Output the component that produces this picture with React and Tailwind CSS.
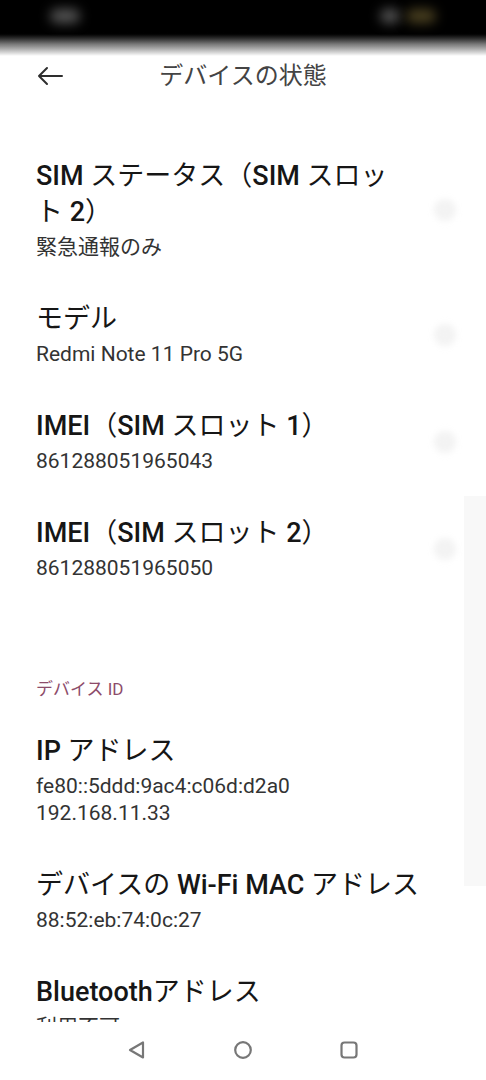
import React from 'react'

const FONT = { fontFamily: '"Roboto", "Noto Sans CJK JP", sans-serif' }

// Latin runs render heavier than the kana in the reference
function Mixed({ text }) {
  const parts = text.split(/([A-Za-z0-9\-]+)/)
  return parts.map((p, i) =>
    /^[A-Za-z0-9\-]+$/.test(p) ? (
      <span key={i} className="font-medium">{p}</span>
    ) : (
      <span key={i}>{p}</span>
    )
  )
}

function Row({ title, lines, dot = true }) {
  return (
    <div className="flex items-center justify-between pl-[36px] pr-[20px] py-[20px]">
      <div className="flex flex-col min-w-0">
        <div className={dot ? 'text-[27px] leading-[36px] text-[#161616] max-w-[372px]' : 'text-[27px] leading-[36px] text-[#161616] whitespace-nowrap'}>
          <Mixed text={title} />
        </div>
        <div className="mt-[4px] flex flex-col">
          {lines.map((l) => (
            <div key={l} className="text-[21px] leading-[27px] text-[#333333]">{l}</div>
          ))}
        </div>
      </div>
      {dot && <div className="w-[22px] h-[22px] mr-[10px] rounded-full bg-[#f3f3f3] blur-[3px] shrink-0" />}
    </div>
  )
}

export default function App() {
  return (
    <div className="w-[486px] h-[1080px] bg-white flex flex-col overflow-hidden relative" style={FONT}>
      {/* blurred status bar */}
      <div className="h-[32px] bg-black shrink-0 flex items-center justify-between px-[50px]">
        <div className="w-[30px] h-[14px] rounded-full bg-[#555] blur-[6px]" />
        <div className="flex gap-[6px]">
          <div className="w-[20px] h-[14px] rounded-full bg-[#555] blur-[6px]" />
          <div className="w-[30px] h-[14px] rounded-full bg-[#4a4020] blur-[6px]" />
        </div>
      </div>
      <div className="h-[24px] shrink-0 bg-gradient-to-b from-black via-[#777] to-white" />

      {/* header */}
      <div className="h-[40px] shrink-0 flex items-center relative">
        <div className="pl-[36px]">
          <svg width="28" height="22" viewBox="0 0 28 22" fill="none" stroke="#2e2e2e" strokeWidth="2" strokeLinecap="round" strokeLinejoin="round">
            <path d="M26 11H3M11 3L3 11L11 19" />
          </svg>
        </div>
        <div className="absolute inset-0 flex items-center justify-center text-[24px] text-[#444]">
          デバイスの状態
        </div>
      </div>

      <div className="flex-1 overflow-hidden relative pt-[42px]">
        <Row title="SIM ステータス（SIM スロット 2）" lines={['緊急通報のみ']} />
        <Row title="モデル" lines={['Redmi Note 11 Pro 5G']} />
        <Row title="IMEI（SIM スロット 1）" lines={['861288051965043']} />
        <Row title="IMEI（SIM スロット 2）" lines={['861288051965050']} />

        <div className="pl-[36px] pt-[75px] pb-[12px] text-[17px] leading-[24px] text-[#8d4c6a]">
          デバイス ID
        </div>
        <Row title="IP アドレス" lines={['fe80::5ddd:9ac4:c06d:d2a0', '192.168.11.33']} dot={false} />
        <Row title="デバイスの Wi-Fi MAC アドレス" lines={['88:52:eb:74:0c:27']} dot={false} />
        <Row title="Bluetoothアドレス" lines={['利用不可']} dot={false} />

        {/* faint scrollbar */}
        <div className="absolute right-0 top-[400px] w-[22px] h-[390px] bg-[#f8f8f8]" />
      </div>

      {/* navigation bar */}
      <div className="h-[58px] shrink-0 bg-white flex items-center justify-center gap-[86px] pb-[2px]">
        <svg width="20" height="20" viewBox="0 0 20 20" fill="none" stroke="#777" strokeWidth="2.2" strokeLinejoin="round">
          <path d="M16 2.5V17.5L3 10Z" />
        </svg>
        <svg width="20" height="20" viewBox="0 0 20 20" fill="none" stroke="#777" strokeWidth="2.2">
          <circle cx="10" cy="10" r="7.8" />
        </svg>
        <svg width="20" height="20" viewBox="0 0 20 20" fill="none" stroke="#777" strokeWidth="2.2">
          <rect x="2.5" y="2.5" width="15" height="15" rx="3" />
        </svg>
      </div>
    </div>
  )
}
